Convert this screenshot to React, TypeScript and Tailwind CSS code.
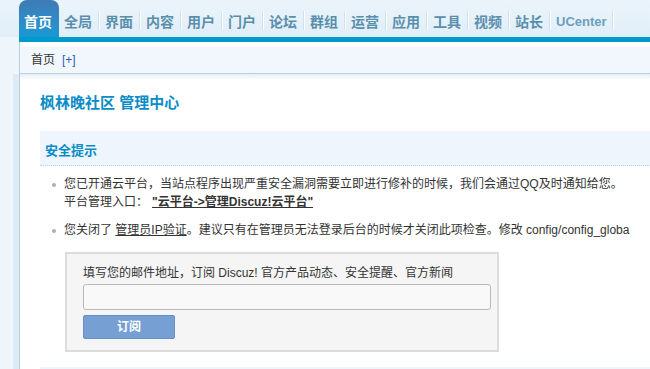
import React from "react";

const tabs = ["全局", "界面", "内容", "用户", "门户", "论坛", "群组", "运营", "应用", "工具", "视频", "站长"];

const font = { fontFamily: '"Liberation Sans", "Noto Sans CJK SC", sans-serif' };

function Bullet() {
  return <span className="absolute left-[12px] top-[8px] w-[4px] h-[4px] rounded-full bg-[#b0b0b0]" />;
}

export default function App() {
  return (
    <div className="w-[650px] h-[369px] overflow-hidden bg-white text-[#333]" style={font}>
      {/* Top nav */}
      <div className="h-[37px] flex items-end pl-[19px] bg-gradient-to-b from-[#ebf4fb] to-[#e1eef8]">
        <div className="w-[40px] h-[37px] rounded-t-[8px] bg-gradient-to-b from-[#3d7bb6] to-[#1499d3] flex items-end pb-[5px] pl-[5px]">
          <span className="text-[14px] leading-[20px] font-bold text-white">首页</span>
        </div>
        {tabs.map((t) => (
          <div key={t} className="flex items-end">
            <span className="pl-[5px] pr-[6px] pb-[5px] text-[14px] leading-[20px] font-bold text-[#5a8fac]">{t}</span>
            <span className="w-px h-[19px] mb-[7px] bg-[#cfe0ee] border-r border-white box-content" />
          </div>
        ))}
        <div className="flex items-end">
          <span className="pl-[5px] pr-[5px] pb-[5px] text-[13px] leading-[20px] font-bold text-[#6c9fc0]">UCenter</span>
          <span className="w-px h-[19px] mb-[7px] bg-[#cfe0ee] border-r border-white box-content" />
        </div>
      </div>

      <div className="flex h-[332px]">
        {/* Left column */}
        <div className="w-[19px] shrink-0 flex flex-col">
          <div className="h-[37px] shrink-0 bg-[#eef6fc]" />
          <div className="flex-1 flex bg-[#eef6fc]">
            <div className="w-[13px]" />
            <div className="w-[6px] bg-[#dcebf6]" />
          </div>
        </div>

        {/* Main */}
        <div className="flex-1 min-w-0 flex flex-col">
          <div className="h-[5px] shrink-0 bg-[#0099cc]" />
          <div className="flex-1 border-l border-[#b5d0dc] overflow-hidden">
            <div className="h-[5px] bg-white" />
            <div className="h-[27px] bg-[#f1f7fc] border-b border-[#b4d2de] flex items-center pl-[11px] text-[12px]">
              <span>首页</span>
              <span className="ml-[7px] text-[#2c62b8]">[+]</span>
            </div>
            <div className="h-[6px] bg-gradient-to-b from-[#e4eef6] to-white" />

            <div className="pl-[20px]">
              <h1 className="pt-[14px] text-[15px] leading-[18px] font-bold text-[#0a8cc6]">枫林晚社区 管理中心</h1>

              <div className="mt-[19px] h-[35px] bg-[#eef5fc] border-b border-dotted border-[#bcd6ec] pl-[5px] pt-[7px]">
                <span className="text-[13px] leading-[18px] font-bold text-[#0a8cc6]">安全提示</span>
              </div>

              <ul className="mt-[9px] text-[12px] leading-[18px] whitespace-nowrap">
                <li className="relative pl-[24px]">
                  <Bullet />
                  <div>您已开通云平台，当站点程序出现严重安全漏洞需要立即进行修补的时候，我们会通过QQ及时通知给您。</div>
                  <div>
                    平台管理入口：
                    <a className="ml-[4px] font-bold underline">"云平台-&gt;管理Discuz!云平台"</a>
                  </div>
                </li>
                <li className="relative pl-[24px] mt-[10px]">
                  <Bullet />
                  您关闭了 <a className="underline">管理员IP验证</a>。建议只有在管理员无法登录后台的时候才关闭此项检查。修改 config/config_globa
                </li>
              </ul>

              <div className="mt-[13px] ml-[25px] w-[434px] h-[100px] border-2 border-[#dcdcdc] bg-[#f5f5f5] pl-[16px] pt-[10px] text-[12px]">
                <div className="leading-[18px]">填写您的邮件地址，订阅 Discuz! 官方产品动态、安全提醒、官方新闻</div>
                <div className="mt-[2px] w-[408px] h-[26px] rounded-[3px] border border-[#b8b8b8] bg-[#f9f9f9]" />
                <button className="mt-[5px] w-[92px] h-[24px] rounded-[2px] border border-[#6690c4] bg-[#76a0d3] text-white font-bold text-[12px]">
                  订阅
                </button>
              </div>

              <div className="mt-[15px] h-[20px] bg-[#eef5fc]" />
            </div>
          </div>
        </div>
      </div>
    </div>
  );
}
